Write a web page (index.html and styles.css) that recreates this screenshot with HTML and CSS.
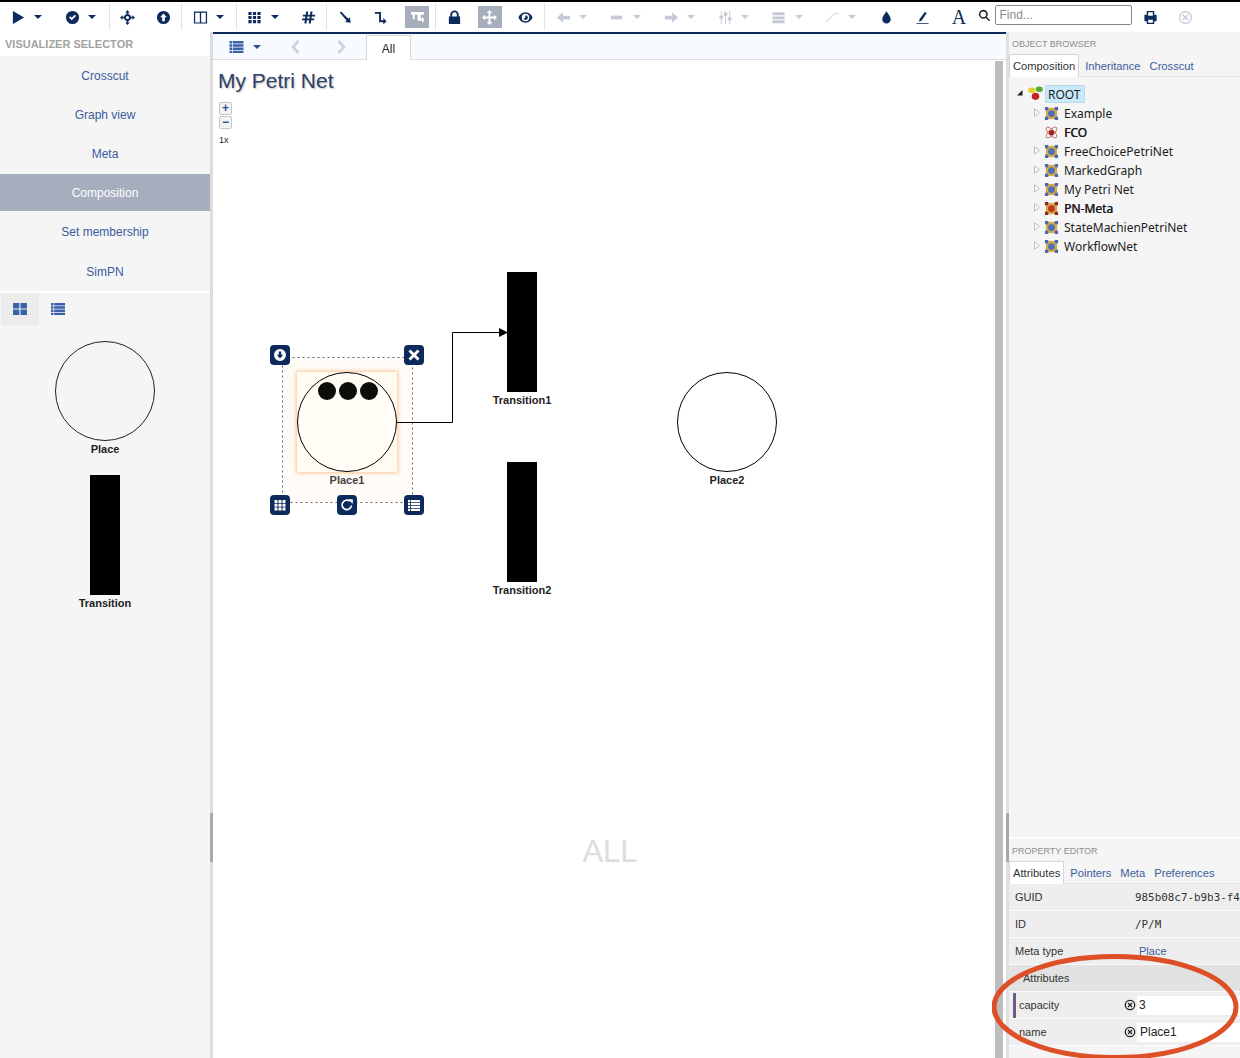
FILE: index.html
```html
<!DOCTYPE html>
<html lang="en">
<head>
<meta charset="utf-8">
<title>My Petri Net</title>
<link rel="stylesheet" href="styles.css">
</head>
<body>
<header class="toolbar">
  <div class="tb wide"><svg class="ic" viewBox="0 0 16 16"><path d="M2 1l12 7-12 7z"/></svg><i class="caret"></i></div>
  <div class="tb wide"><svg class="ic" viewBox="0 0 16 16"><path fill-rule="evenodd" d="M8 1a7 7 0 1 1 0 14A7 7 0 0 1 8 1zM4.300 8l1.300-1.300L7.200 8.200l3.300-3.200 1.300 1.300-4.600 4.500z"/></svg><i class="caret"></i></div>
  <div class="tb sep"><svg class="ic" viewBox="0 0 16 16"><path fill-rule="evenodd" d="M8 0l2.300 2.800H8.900v1.400a4 4 0 0 1 2.900 2.900h1.400V5.700L16 8l-2.800 2.300V8.900h-1.400a4 4 0 0 1-2.900 2.900v1.400h1.400L8 16l-2.300-2.800h1.400v-1.400a4 4 0 0 1-2.900-2.900H2.800v1.400L0 8l2.800-2.300v1.400h1.400a4 4 0 0 1 2.900-2.900V2.800H5.700zM8 6.300a1.700 1.700 0 1 0 0 3.400 1.700 1.700 0 0 0 0-3.400z"/></svg></div>
  <div class="tb"><svg class="ic" viewBox="0 0 16 16"><path fill-rule="evenodd" d="M8 1a7 7 0 1 1 0 14A7 7 0 0 1 8 1zM8 3.600L4.400 7.800h2.200V12h2.800V7.800h2.200z"/></svg></div>
  <div class="tb wide sep"><svg class="ic" viewBox="0 0 16 16"><path fill-rule="evenodd" d="M1 1.500h14v13H1zM2.300 2.800v10.400h5V2.800zM8.700 2.800v10.400h5V2.800z"/></svg><i class="caret"></i></div>
  <div class="tb wide sep"><svg class="ic" viewBox="0 0 16 16"><path d="M1.500 2h3.400v3.400H1.500zM6.300 2h3.400v3.400H6.300zM11.100 2h3.400v3.400h-3.400zM1.500 6.300h3.400v3.400H1.500zM6.300 6.300h3.400v3.400H6.300zM11.100 6.300h3.400v3.400h-3.400zM1.500 10.600h3.400V14H1.500zM6.300 10.600h3.400V14H6.300zM11.100 10.600h3.400V14h-3.400z"/></svg><i class="caret"></i></div>
  <div class="tb"><svg class="ic" viewBox="0 0 16 16"><path fill-rule="evenodd" d="M5.500 1.500h2.200L7.200 5h2.400l.5-3.500h2.200L11.800 5H15v2h-3.500l-.3 2H14v2h-3.100l-.5 3.500H8.200L8.700 11H6.300l-.5 3.500H3.600L4.100 11H1V9h3.400l.3-2H2V5h3zM6.900 7l-.3 2H9l.3-2z"/></svg></div>
  <div class="tb sep"><svg class="ic" viewBox="0 0 16 16"><path d="M2 2.800L3.200 1.600 11 9.400l1.700-1.700.8 6-6-.8 1.700-1.700z"/></svg></div>
  <div class="tb"><svg class="ic" viewBox="0 0 16 16"><path d="M2 2h6.500v9h2.500V8.500l3.500 3.500-3.500 3.500V13H6.500V4H2z"/></svg></div>
  <div class="tb"><span class="hl"><svg class="ic white" viewBox="0 0 16 16"><path d="M1 2h14v3h-3.500v4H13V7l2.500 3.500L13 14v-2.500H8V5H1z"/><path d="M3 5h2v5H3z"/></svg></span></div>
  <div class="tb sep"><svg class="ic" viewBox="0 0 16 16"><path fill-rule="evenodd" d="M2 7h1.500V5a4.500 4.500 0 0 1 9 0v2H14v8H2zM5.500 7h5V5a2.500 2.500 0 0 0-5 0z"/></svg></div>
  <div class="tb"><span class="hl"><svg class="ic white" viewBox="0 0 16 16"><path d="M8 0l3 3.200H9V7h3.800V5L16 8l-3.200 3V9H9v3.800h2L8 16l-3-3.200h2V9H3.200v2L0 8l3.200-3v2H7V3.200H5z"/></svg></span></div>
  <div class="tb"><svg class="ic" viewBox="0 0 16 16"><path fill-rule="evenodd" d="M8 2.500c3.800 0 6.500 3 7.500 5.500-1 2.500-3.700 5.500-7.500 5.500S1.500 10.500.5 8C1.500 5.500 4.200 2.500 8 2.500zM8 4a4 4 0 1 0 0 8 4 4 0 0 0 0-8zm0 1.500a2.500 2.500 0 1 1-2.300 3.500c.8.300 1.700-.2 2-1 .3-.8 0-1.800.3-2.500z"/></svg></div>
  <div class="tb wide off sep"><svg class="ic" viewBox="0 0 16 16"><path d="M1 8l6.500-5.500V6H15v4H7.500v3.500z"/></svg><i class="caret"></i></div>
  <div class="tb wide off"><svg class="ic" viewBox="0 0 16 16"><path d="M2 6h12v4H2z"/></svg><i class="caret"></i></div>
  <div class="tb wide off"><svg class="ic" viewBox="0 0 16 16"><path d="M15 8L8.500 2.500V6H1v4h7.500v3.500z"/></svg><i class="caret"></i></div>
  <div class="tb wide tight off"><svg class="ic" viewBox="0 0 16 16"><path d="M3 1h1v5h1.500v3H4v6H3V9H1.500V6H3zM7.500 1h1v2H10v3H8.500v9h-1V6H6V3h1.500zM12 1h1v7h1.500v3H13v4h-1v-4h-1.500V8H12z"/></svg><i class="caret"></i></div>
  <div class="tb wide tight off"><svg class="ic" viewBox="0 0 16 16"><path d="M1.500 2.500h13v3h-13zM1.500 6.800h13v3h-13zM1.500 11h13v3h-13z"/></svg><i class="caret"></i></div>
  <div class="tb wide off"><svg class="ic" viewBox="0 0 16 16"><path d="M1 12c3-.5 3.500-1.500 5-4s3-4 8.500-4.500" fill="none" stroke="#c4cad6" stroke-width="1"/></svg><i class="caret"></i></div>
  <div class="tb"><svg class="ic" viewBox="0 0 16 16"><path d="M8 1c1 2.500 4.500 5.500 4.500 9a4.500 4.500 0 0 1-9 0C3.500 6.500 7 3.500 8 1z"/></svg></div>
  <div class="tb"><svg class="ic" viewBox="0 0 16 16"><path d="M10.500 2l2 1.300L7 11.500l-2.500 1 .2-2.700zM1.500 14h13v1h-13z"/></svg></div>
  <div class="tb"><span class="serif-a">A</span></div>
  <svg class="ic search" viewBox="0 0 16 16"><path fill-rule="evenodd" d="M6.500 1a5.500 5.500 0 0 1 4.400 8.800l4.100 4-1.300 1.300-4.100-4A5.500 5.500 0 1 1 6.500 1zm0 2a3.500 3.500 0 1 0 0 7 3.500 3.500 0 0 0 0-7z"/></svg>
  <input class="find" placeholder="Find...">
  <div class="tb narrow"><svg class="ic" viewBox="0 0 16 16"><path fill-rule="evenodd" d="M4 1h8v4h2.500v7H12v3H4v-3H1.500V5H4zm1.500 1.500V6h5V2.500zm0 8v3h5v-3z"/></svg></div>
  <div class="tb narrow off"><svg class="ic" viewBox="0 0 16 16"><path fill-rule="evenodd" d="M8 1a7 7 0 1 1 0 14A7 7 0 0 1 8 1zm0 1.300a5.700 5.700 0 1 0 0 11.400A5.700 5.700 0 0 0 8 2.300zM5.500 4.500L8 7l2.500-2.500 1 1L9 8l2.500 2.500-1 1L8 9l-2.500 2.500-1-1L7 8 4.500 5.500z"/></svg></div>
</header>

<main class="workspace">
  <aside class="left">
    <h2 class="panel-title strong">VISUALIZER SELECTOR</h2>
    <nav class="viz-list">
      <a class="viz">Crosscut</a>
      <a class="viz">Graph view</a>
      <a class="viz">Meta</a>
      <a class="viz active">Composition</a>
      <a class="viz">Set membership</a>
      <a class="viz">SimPN</a>
    </nav>
    <div class="view-tabs">
      <span class="view-tab on"><svg class="vt-ic" viewBox="0 0 14 14"><path d="M0 1h6.300v5.600H0zM7.500 1H14v5.600H7.500zM0 7.600h6.300V13H0zM7.500 7.600H14V13H7.500z"/></svg></span>
      <span class="view-tab"><svg class="vt-ic" viewBox="0 0 14 14"><path d="M0 1h2.500v2.400H0zM3.200 1H14v2.400H3.200zM0 4.300h2.500v2.400H0zM3.200 4.300H14v2.400H3.200zM0 7.500h2.500v2.400H0zM3.200 7.500H14v2.400H3.200zM0 10.700h2.500V13H0zM3.200 10.700H14V13H3.200z"/></svg></span>
    </div>
    <div class="palette">
      <div class="pal-item">
        <div class="pl-circle"></div>
        <div class="node-label">Place</div>
      </div>
      <div class="pal-item">
        <div class="tr-bar"></div>
        <div class="node-label">Transition</div>
      </div>
    </div>
  </aside>
  <div class="splitter"><span class="grip"></span></div>

  <section class="center">
    <div class="tabbar">
      <svg class="list-ic" viewBox="0 0 14 14"><path d="M0 1h2.500v2.400H0zM3.200 1H14v2.400H3.200zM0 4.300h2.500v2.400H0zM3.200 4.300H14v2.400H3.200zM0 7.500h2.500v2.400H0zM3.200 7.500H14v2.400H3.200zM0 10.700h2.500V13H0zM3.200 10.700H14V13H3.200z"/></svg>
      <i class="caret blue"></i>
      <svg class="chev" viewBox="0 0 10 14"><path d="M7.500 1L2 7l5.500 6" /></svg>
      <svg class="chev" viewBox="0 0 10 14"><path d="M2.500 1L8 7l-5.500 6" /></svg>
      <span class="tab-all">All</span>
    </div>
    <div class="canvas-wrap">
      <div class="canvas">
        <h1 class="title">My Petri Net</h1>
        <div class="zoom-box">
          <button class="zbtn">+</button>
          <button class="zbtn">−</button>
          <span class="zlabel">1x</span>
        </div>

        <svg class="selection" width="131" height="146" viewBox="0 0 131 146"><rect x=".5" y=".5" width="130" height="145" fill="#fffcf7" stroke="#666" stroke-dasharray="2 3"/></svg>
        <div class="glow" style="left:84px;top:312px"></div>
        <div class="place hi" style="left:84px;top:312px">
          <span class="token" style="left:20px"></span><span class="token" style="left:41px"></span><span class="token" style="left:62px"></span>
        </div>
        <div class="cv-label dim" style="left:84px;top:414px">Place1</div>
        <svg class="wire" width="120" height="100" viewBox="0 0 120 100"><path d="M0 95.500h55.500v-90H104" fill="none" stroke="#000"/><path d="M102 1l9 4.500-9 4.500z"/></svg>
        <div class="transition" style="left:294px;top:212px"></div>
        <div class="cv-label" style="left:259px;top:334px">Transition1</div>
        <div class="transition" style="left:294px;top:402px"></div>
        <div class="cv-label" style="left:259px;top:524px">Transition2</div>
        <div class="place" style="left:464px;top:312px"></div>
        <div class="cv-label" style="left:464px;top:414px">Place2</div>

        <span class="handle" style="left:57px;top:285px"><svg viewBox="0 0 14 14"><path fill="#fff" fill-rule="evenodd" d="M7 1a6 6 0 1 1 0 12A6 6 0 0 1 7 1zM5.800 3.500v3.300H3.800L7 10.500l3.200-3.700H8.200V3.500z"/></svg></span>
        <span class="handle" style="left:191px;top:285px"><svg viewBox="0 0 14 14"><path fill="#fff" d="M3.500 1.500L7 5l3.500-3.500 2 2L9 7l3.500 3.500-2 2L7 9l-3.500 3.500-2-2L5 7 1.500 3.500z"/></svg></span>
        <span class="handle" style="left:57px;top:435px"><svg viewBox="0 0 14 14"><path fill="#fff" d="M1.500 2h3v3h-3zM5.500 2h3v3h-3zM9.500 2h3v3h-3zM1.500 5.700h3v3h-3zM5.500 5.700h3v3h-3zM9.500 5.700h3v3h-3zM1.500 9.400h3v3h-3zM5.500 9.400h3v3h-3zM9.500 9.400h3v3h-3z"/></svg></span>
        <span class="handle" style="left:124px;top:435px"><svg viewBox="0 0 14 14"><path fill="none" stroke="#fff" stroke-width="1.700" d="M11.500 7.500A4.700 4.700 0 1 1 9.800 3.200"/><path fill="#fff" d="M8.500 1l4.500.5-.5 4.500z"/></svg></span>
        <span class="handle" style="left:191px;top:435px"><svg viewBox="0 0 14 14"><path fill="#fff" d="M1 2h2.200v2.200H1zM4 2h9v2.200H4zM1 5h2.200v2.200H1zM4 5h9v2.200H4zM1 8h2.200v2.200H1zM4 8h9v2.200H4zM1 11h2.200v2H1zM4 11h9v2H4z"/></svg></span>

        <div class="watermark">ALL</div>
      </div>
      <div class="vscroll"><span class="vthumb"></span></div>
    </div>
  </section>

  <aside class="right">
    <span class="rgrip"></span>
    <div class="browser">
      <h2 class="panel-title small">OBJECT BROWSER</h2>
      <div class="ptabs">
        <span class="ptab on">Composition</span><span class="ptab">Inheritance</span><span class="ptab">Crosscut</span>
      </div>
      <ul class="tree">
        <li class="root"><svg class="tw" viewBox="0 0 6 9"><path d="M5.500 2v5.500H0z" fill="#222"/></svg>
          <svg class="ti" viewBox="0 0 16 16"><ellipse cx="4" cy="4.500" rx="3.800" ry="3" fill="#e3cf2a"/><ellipse cx="12" cy="3.500" rx="3.800" ry="3" fill="#55ad35"/><ellipse cx="8" cy="11" rx="4" ry="3.800" fill="#c4241f"/></svg>
          <span class="sel">ROOT</span></li>
        <li><svg class="tw" viewBox="0 0 6 9"><use href="#twisty"/></svg><svg class="ti"><use href="#model"/></svg>Example</li>
        <li><svg class="tw none" viewBox="0 0 6 9"></svg><svg class="ti" viewBox="0 0 16 16"><g fill="none" stroke="#b45a5a" stroke-width=".9"><ellipse cx="8" cy="8" rx="7.500" ry="3" transform="rotate(45 8 8)"/><ellipse cx="8" cy="8" rx="7.500" ry="3" transform="rotate(-45 8 8)"/></g><circle cx="8" cy="8" r="2.800" fill="#a81c1c"/></svg><span class="bolder">FCO</span></li>
        <li><svg class="tw" viewBox="0 0 6 9"><use href="#twisty"/></svg><svg class="ti"><use href="#model"/></svg>FreeChoicePetriNet</li>
        <li><svg class="tw" viewBox="0 0 6 9"><use href="#twisty"/></svg><svg class="ti"><use href="#model"/></svg>MarkedGraph</li>
        <li><svg class="tw" viewBox="0 0 6 9"><use href="#twisty"/></svg><svg class="ti"><use href="#model"/></svg>My Petri Net</li>
        <li><svg class="tw" viewBox="0 0 6 9"><use href="#twisty"/></svg><svg class="ti"><use href="#modelred"/></svg><span class="bolder">PN-Meta</span></li>
        <li><svg class="tw" viewBox="0 0 6 9"><use href="#twisty"/></svg><svg class="ti"><use href="#model"/></svg>StateMachienPetriNet</li>
        <li><svg class="tw" viewBox="0 0 6 9"><use href="#twisty"/></svg><svg class="ti"><use href="#model"/></svg>WorkflowNet</li>
      </ul>
    </div>
    <div class="props">
      <h2 class="panel-title small">PROPERTY EDITOR</h2>
      <div class="ptabs">
        <span class="ptab on">Attributes</span><span class="ptab">Pointers</span><span class="ptab">Meta</span><span class="ptab">Preferences</span>
      </div>
      <div class="prow"><span class="pk">GUID</span><span class="pv mono">985b08c7-b9b3-f4</span></div>
      <div class="prow"><span class="pk">ID</span><span class="pv mono">/P/M</span></div>
      <div class="prow"><span class="pk">Meta type</span><a class="pv link">Place</a></div>
      <div class="prow group"><span class="pk">Attributes</span></div>
      <div class="prow attr marked"><span class="pk">capacity</span><svg class="clear" viewBox="0 0 12 12"><circle cx="6" cy="6" r="4.700" fill="none" stroke="#222" stroke-width="1.300"/><path d="M4 4l4 4M8 4l-4 4" stroke="#222" stroke-width="1.300"/></svg><span class="pin">3</span></div>
      <div class="prow attr"><span class="pk">name</span><svg class="clear" viewBox="0 0 12 12"><circle cx="6" cy="6" r="4.700" fill="none" stroke="#222" stroke-width="1.300"/><path d="M4 4l4 4M8 4l-4 4" stroke="#222" stroke-width="1.300"/></svg><span class="pin wide-pad">Place1</span></div>
    </div>
  </aside>
</main>

<svg class="annotation" width="260" height="120" viewBox="0 0 260 120"><ellipse cx="123" cy="55" rx="121" ry="50.500" fill="none" stroke="#dd4f27" stroke-width="5"/></svg>

<svg class="defs" width="0" height="0">
  <symbol id="twisty" viewBox="0 0 6 9"><path d="M.5.8L5.300 4.500.5 8.200z" fill="#fff" stroke="#aaa" stroke-width=".8"/></symbol>
  <symbol id="model" viewBox="0 0 16 16"><rect x="2" y="2" width="12" height="12" fill="#d5a94e"/><circle cx="8" cy="8" r="3.600" fill="#4d6fb5"/><path d="M1 1h3.500v3.500H1zM11.500 1H15v3.500h-3.500zM1 11.500h3.500V15H1zM11.500 11.500H15V15h-3.500z" fill="#4a69ad"/></symbol>
  <symbol id="modelred" viewBox="0 0 16 16"><rect x="2" y="2" width="12" height="12" fill="#d5a94e"/><circle cx="8" cy="8" r="3.600" fill="#c2361e"/><path d="M1 1h3.500v3.500H1zM11.500 1H15v3.500h-3.500zM1 11.500h3.500V15H1zM11.500 11.500H15V15h-3.500z" fill="#8c2a22"/></symbol>
</svg>
</body>
</html>
```

FILE: styles.css
```css
* { box-sizing: border-box; }
html, body { margin: 0; padding: 0; height: 1058px; overflow: hidden; background: #fff; }
body { font-family: "Liberation Sans", Arial, sans-serif; font-size: 12px; color: #222; position: relative; }

.toolbar { display: flex; align-items: center; height: 32px; border-top: 2px solid #000; background: #fff; }
.tb { flex: 0 0 36.3px; height: 26px; display: flex; align-items: center; position: relative; }
.tb.wide { flex-basis: 54.4px; }
.tb.tight { flex-basis: 53.4px; }
.tb.narrow { flex-basis: 35px; }
.tb > .ic, .tb > .serif-a { margin-left: 10.5px; }
.tb.narrow > .ic { margin-left: 11px; }
.tb.sep { border-left: 1px solid #e2e2e2; }
.ic { width: 15px; height: 15px; fill: #0c2a5b; display: block; flex: none; }
.ic.white { fill: #fff; }
.tb.off .ic { fill: #c4cad6; }
.caret { width: 0; height: 0; border-left: 4px solid transparent; border-right: 4px solid transparent; border-top: 4px solid #0c2a5b; margin-left: 8.500px; display: block; flex: none; }
.tb.off .caret { border-top-color: #c4cad6; }
.hl { width: 24px; height: 22px; background: #a6aebd; display: flex; align-items: center; justify-content: center; margin-left: 6px; }
.serif-a { font-family: "Liberation Serif", serif; font-size: 20px; color: #0c2a5b; line-height: 1; }
.search { margin-left: 1px; width: 13px; height: 13px; fill: #222; margin-top: -4px; }
.find { width: 137px; height: 20px; margin-left: 4px; margin-top: -4px; border: 1px solid #8a8a8a; border-radius: 2px; padding: 0 3px; font: 12px "Liberation Sans", sans-serif; }
.find::placeholder { color: #8a8a8a; }

.workspace { display: flex; height: 1026px; }

.left { width: 210px; flex: none; background: #f5f5f5; }
.panel-title { margin: 0; font-size: 11px; color: #a2a2a2; font-weight: normal; background: #fff; }
.panel-title.strong { height: 24px; padding: 6px 0 0 5px; font-weight: bold; }
.viz-list { display: flex; flex-direction: column; border-bottom: 2px solid #fff; }
.viz { height: 39.200px; display: flex; align-items: center; justify-content: center; color: #3a5c9c; font-size: 12px; }
.viz.active { background: #a6aebd; color: #fff; height: 37.500px; margin-bottom: 1.700px; padding-top: 1px; }
.view-tabs { display: flex; height: 33px; padding-left: 1px; }
.view-tab { width: 38px; height: 32px; display: flex; align-items: center; justify-content: center; }
.view-tab.on { background: #ececec; }
.vt-ic { width: 14px; height: 14px; fill: #3a62a8; }
.palette { display: flex; flex-direction: column; align-items: center; padding-top: 15px; }
.pal-item { display: flex; flex-direction: column; align-items: center; margin-bottom: 19px; }
.pl-circle { width: 100px; height: 100px; border: 1px solid #222; border-radius: 50%; }
.tr-bar { width: 30px; height: 120px; background: #000; }
.node-label { font-size: 11px; font-weight: bold; line-height: 13px; margin-top: 2px; color: #222; }

.splitter { width: 3px; flex: none; background: #ddd; position: relative; }
.grip { position: absolute; left: 0; top: 781px; width: 3px; height: 49px; background: #a8a8a8; }

.center { width: 793px; flex: none; display: flex; flex-direction: column; border-top: 2px solid #0c2a5b; }
.tabbar { height: 26px; display: flex; align-items: center; background: #f7faff; border-bottom: 1px solid #dedee2; position: relative; }
.list-ic { width: 15px; height: 14px; fill: #3a62a8; margin-left: 16px; }
.caret.blue { border-top-color: #2e4f8f; margin-left: 9px; }
.chev { width: 10px; height: 14px; fill: none; stroke: #ccd3de; stroke-width: 2.600; margin-left: 30px; }
.chev + .chev { margin-left: 35px; }
.tab-all { margin-left: 20px; width: 45px; height: 25px; margin-top: 2px; padding-top: 1px; background: #fff; border: 1px solid #d8d8d8; border-bottom: 0; display: flex; align-items: center; justify-content: center; font-size: 12px; color: #222; }

.canvas-wrap { flex: 1; display: flex; }
.canvas { flex: 1; position: relative; background: #fff; }
.vscroll { width: 14px; flex: none; background: #fff; padding: 1px 0 0 3px; display: flex; }
.vthumb { width: 8px; background: #bdbdbd; }
.title { position: absolute; left: 5px; top: 8px; margin: 0; font-size: 21px; font-weight: normal; color: #2c4069; line-height: 26px; text-shadow: 1px 1px 2px #bbb; white-space: nowrap; }
.zoom-box { position: absolute; left: 6px; top: 42px; width: 14px; display: flex; flex-direction: column; gap: 1px; }
.zbtn { width: 13px; height: 13px; padding: 0; border: 1px solid #c6c6c6; border-radius: 2px; background: #f4f4f4; color: #2e4f8f; font: bold 12px/11px "Liberation Sans", sans-serif; display: flex; align-items: center; justify-content: center; overflow: hidden; }
.zlabel { font-size: 9px; line-height: 10px; margin-top: 5px; color: #222; }

.selection { position: absolute; left: 69px; top: 297px; }
.glow { position: absolute; width: 100px; height: 100px; background: #fffbf1; box-shadow: 0 0 4px 1px #f6c596; }
.place { position: absolute; width: 100px; height: 100px; border: 1px solid #000; border-radius: 50%; background: #fff; }
.place.hi { background: #fffdf6; }
.token { position: absolute; top: 9px; width: 18px; height: 18px; border-radius: 50%; background: #0d0d08; }
.transition { position: absolute; width: 30px; height: 120px; background: #000; }
.cv-label { position: absolute; width: 100px; text-align: center; font-size: 11px; font-weight: bold; line-height: 13px; color: #222; }
.cv-label.dim { color: #444; }
.wire { position: absolute; left: 184px; top: 267px; }
.handle { position: absolute; width: 20px; height: 20px; background: #0c2a5b; border-radius: 4px; padding: 3px; display: block; }
.handle svg { display: block; width: 14px; height: 14px; }
.watermark { position: absolute; left: 340px; top: 773px; width: 114px; text-align: center; font-size: 31px; color: #ddd; line-height: 38px; }

.right { flex: 1; display: flex; flex-direction: column; background: #f5f5f5; border-left: 3px solid #e0e0e0; position: relative; }
.rgrip { position: absolute; left: -3px; top: 781px; width: 3px; height: 49px; background: #a8a8a8; }
.browser { height: 805px; }
.panel-title.small { height: 22px; padding: 6px 0 0 3px; font-size: 9px; background: transparent; color: #8e8e8e; line-height: 12px; }
.ptabs { display: flex; height: 23px; border-bottom: 1px solid #e4e4e4; font-size: 11.200px; }
.ptab { color: #3a5c9c; padding: 1px 3px 0; margin-right: 4px; height: 22px; display: flex; align-items: center; }
.ptab + .ptab { margin-right: 3px; }
.ptab.on { background: #fff; color: #333; border: 1px solid #d6d6d6; border-bottom: 0; height: 23px; margin-right: 3px; padding: 0 3px; }
.tree { list-style: none; margin: 8px 0 0 0; padding: 0 0 0 7px; font-family: "Noto Sans", sans-serif; font-size: 12px; color: #1c1c1c; }
.tree li { height: 19px; display: flex; align-items: center; padding-left: 18px; white-space: nowrap; }
.tree li.root { padding-left: 1px; margin-top: -1px; margin-bottom: 1px; }
.tw { width: 6px; height: 9px; margin-right: 4px; flex: none; margin-top: -2px; }
.root .tw { margin-right: 5px; }
.tw.none { visibility: hidden; }
.ti { width: 15px; height: 15px; margin-right: 5px; flex: none; }
.sel { background: #cbe8fb; border: 1px solid #b3dcf6; height: 18px; padding: 0 3px 0 2px; line-height: 17px; margin-left: -3px; }
.bolder { text-shadow: .4px 0 0 #1c1c1c; }

.props { border-top: 2px solid #fff; flex: 1; }
.prow { height: 27px; display: flex; align-items: center; border-bottom: 1px solid #fafafa; background: #eee; position: relative; font-size: 11px; color: #333; padding-left: 6px; white-space: nowrap; overflow: hidden; }
.pk { width: 120px; flex: none; }
.pv.mono { font-family: "DejaVu Sans Mono", monospace; font-size: 10.900px; }
.pv.link { color: #3a5c9c; margin-left: 4px; }
.prow.group { background: #e2e2e2; padding-left: 14px; }
.prow.attr { padding-left: 10px; }
.prow.attr .pk { width: 105px; }
.prow.marked::before { content: ""; position: absolute; left: 4px; top: 1px; width: 3px; height: 25px; background: #6e5a84; }
.clear { width: 12px; height: 12px; flex: none; }
.pin { flex: 1; height: 19px; background: #fff; margin-left: 1px; padding-left: 2px; font-size: 12px; line-height: 18px; color: #222; }
.pin.wide-pad { padding-left: 3px; }
.annotation { position: absolute; left: 992px; top: 952px; }
.defs { position: absolute; }
```
